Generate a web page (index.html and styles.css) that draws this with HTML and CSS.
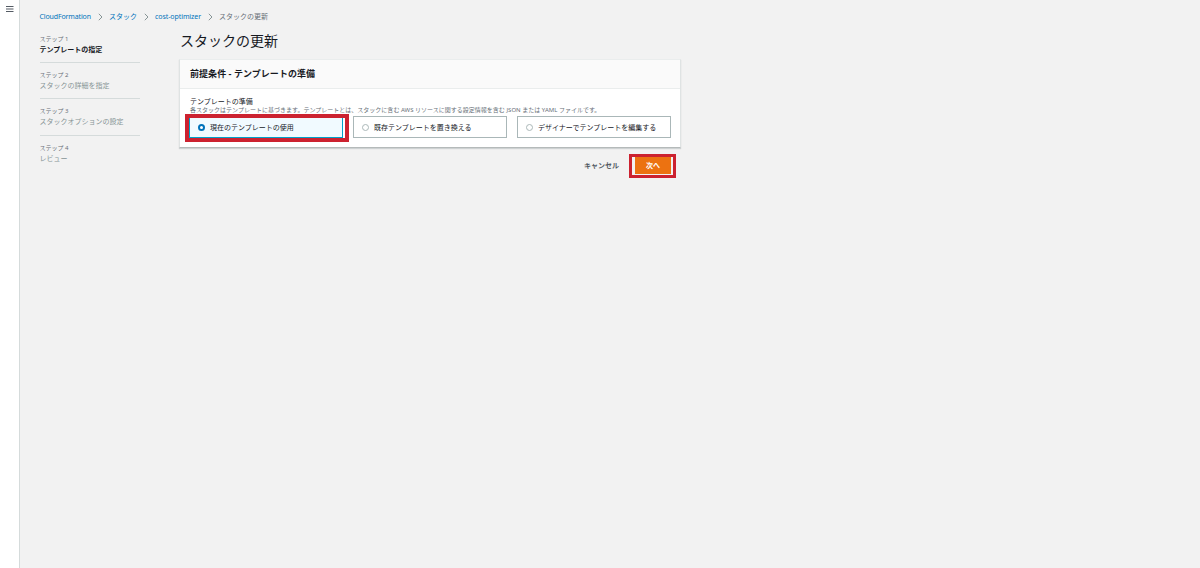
FILE: index.html
```html
<!DOCTYPE html>
<html lang="ja">

	<head>
		<title>スタックの更新</title>
		<meta charset="utf-8" />
		<link rel="stylesheet" href="styles.css">
	</head>

	<body>
		<div class="sidebar">
			<svg class="menuIcon" width="8" height="8" viewBox="0 0 8 8"><path d="M0 1.5h7.5M0 4h7.5M0 6.5h7.5" /></svg>
		</div>
		<div class="main">
			<div class="breadcrumb">
				<a class="bc1">CloudFormation</a>
				<svg class="sep" width="5" height="8" viewBox="0 0 5 8"><path d="M.8 .8L4 4L.8 7.2" /></svg>
				<a class="bc2">スタック</a>
				<svg class="sep" width="5" height="8" viewBox="0 0 5 8"><path d="M.8 .8L4 4L.8 7.2" /></svg>
				<a class="bc3">cost-optimizer</a>
				<svg class="sep" width="5" height="8" viewBox="0 0 5 8"><path d="M.8 .8L4 4L.8 7.2" /></svg>
				<span>スタックの更新</span>
			</div>
			<div class="content">
				<div class="steps">
					<div class="step active"><small>ステップ 1</small><p>テンプレートの指定</p></div>
					<div class="step"><small>ステップ 2</small><p>スタックの詳細を指定</p></div>
					<div class="step"><small>ステップ 3</small><p>スタックオプションの設定</p></div>
					<div class="step"><small>ステップ 4</small><p>レビュー</p></div>
				</div>
				<div class="form">
					<h1>スタックの更新</h1>
					<div class="panel">
						<h2>前提条件 - テンプレートの準備</h2>
						<div class="panelBody">
							<div class="label">テンプレートの準備</div>
							<div class="hint">各スタックはテンプレートに基づきます。テンプレートとは、スタックに含む AWS リソースに関する設定情報を含む JSON または YAML ファイルです。</div>
							<div class="tiles">
								<div class="tile selected"><i class="radio"></i>現在のテンプレートの使用<div class="mark"></div></div>
								<div class="tile"><i class="radio"></i>既存テンプレートを置き換える</div>
								<div class="tile"><i class="radio"></i>デザイナーでテンプレートを編集する</div>
							</div>
						</div>
					</div>
					<div class="actions">
						<span class="cancel">キャンセル</span>
						<div class="next">次へ<div class="mark"></div></div>
					</div>
				</div>
			</div>
		</div>
	</body>

</html>
```
FILE: styles.css
```css
* {box-sizing: border-box;}
body {margin: 0;height: 568px;display: flex;overflow: hidden;background: #f2f2f2;color: #16191f;font: 7px/11px "Noto Sans", "Noto Sans CJK JP", sans-serif;}
h1, h2, p {margin: 0;}
svg {display: block;fill: none;}
.sidebar {width: 20px;padding: 5px 0 0 6px;background: #fff;border-right: 1px solid #d5dbdb;}
.menuIcon {stroke: #545b64;stroke-width: 1.1;}
.main {flex: 1;padding: 11px 0 0 19.5px;}
.breadcrumb {display: flex;align-items: center;height: 11px;color: #687078;white-space: nowrap;}
.breadcrumb a {color: #0073bb;}
.bc1 {width: 51.5px;letter-spacing: -.13px;}
.bc2 {width: 28px;}
.bc3 {width: 46px;letter-spacing: -.08px;}
.sep {margin: 0 6px 0 7px;stroke: #879596;stroke-width: 1;}
.content {display: flex;}
.steps {width: 100px;padding-top: 12px;}
.step {height: 36.3px;color: #879596;}
.step + .step {padding-top: 7px;border-top: 1px solid #d5dbdb;}
.step:first-child {height: 28px;}
.step small {display: block;font-size: 6px;line-height: 11px;color: #687078;}
.step p {line-height: 10px;}
.active p {color: #16191f;font-weight: bold;}
.form {width: 502px;margin-left: 39.5px;}
h1 {height: 37px;padding: 9px 0 0 1px;font-size: 14px;line-height: 20px;font-weight: normal;}
.panel {height: 89px;background: #fff;border: 1px solid #dfe3e3;border-top-color: #eaeded;border-bottom-color: #b5baba;box-shadow: 0 1px 1px rgba(0,28,36,.15);}
h2 {height: 29px;padding-left: 10px;background: #fafafa;border-bottom: 1px solid #eaeded;font-size: 9px;line-height: 28px;letter-spacing: .05px;}
.panelBody {padding: 7px 9px 0;}
.label {padding-left: 1px;line-height: 11px;}
.hint {height: 9px;padding-left: 1px;font-size: 6px;line-height: 7px;letter-spacing: .01px;color: #687078;white-space: nowrap;}
.tiles {display: flex;gap: 10px;}
.tile {position: relative;flex: 1;display: flex;align-items: center;height: 22px;padding-left: 8px;background: #fff;border: 1px solid #aab7b8;white-space: nowrap;}
.radio {width: 7px;height: 7px;margin-right: 5px;border: 1px solid #aab7b8;border-radius: 50%;background: #fff;}
.selected {background: #f1faff;border-color: #00a1c9;}
.selected .radio {border: 2px solid #0073bb;}
.mark {position: absolute;border: 4px solid #cc2230;}
.tile .mark {left: -5px;top: -3px;width: 164px;height: 28px;}
.actions {display: flex;justify-content: flex-end;align-items: center;padding: 9px 10px 0 0;}
.cancel {margin-right: 16px;color: #545b64;font-weight: bold;}
.next {position: relative;width: 36px;height: 17px;background: #ec7211;color: #fff;font-weight: bold;line-height: 18px;text-align: center;}
.next .mark {left: -6px;top: -3px;width: 47px;height: 24px;border-width: 3px;}
```
